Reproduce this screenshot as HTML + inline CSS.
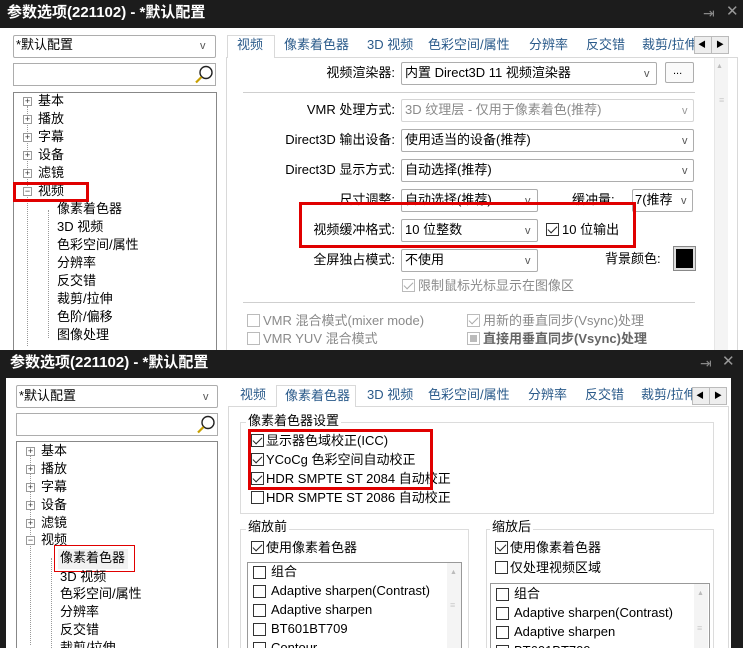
<!DOCTYPE html>
<html style="width:743px;height:648px;overflow:hidden"><head><meta charset="utf-8"><style>
*{margin:0;padding:0;box-sizing:border-box}
body{width:743px;height:648px;overflow:hidden;background:#fff;position:relative;font-family:"Liberation Sans","Noto Sans CJK SC",sans-serif;font-size:13px;color:#000}
div,span{position:absolute}
.t{white-space:nowrap;line-height:16px}
.title{background:#1c1c1c;color:#fff;font-weight:bold;font-size:14px}
.box{border:1px solid #adadad;background:#fff}
.cb{border:1px solid #adadad;background:#fff;border-radius:2px}
.v{font-size:11px;color:#555}
.tab{color:#2a5a8a;white-space:nowrap;line-height:16px}
.chk{width:13px;height:13px;border:1px solid #333;background:#fff}
.chk.on::after{content:"";position:absolute;left:3px;top:0px;width:4px;height:8px;border:solid #222;border-width:0 1.5px 1.5px 0;transform:rotate(45deg)}
.g{color:#8a8a8a}
.g .chk,.chk.g{border-color:#bbb}
.chk.g.on::after{border-color:#aaa}
.red{border:3px solid #e00000}
.pm{width:9px;height:9px;border:1px solid #999;background:#fff;font-size:9px;line-height:7px;text-align:center;color:#333}
.line{background:#cfcfcf}
</style></head><body>

<!-- ===== TOP WINDOW ===== -->
<div class="title" style="left:0;top:0;width:743px;height:28px"></div>
<div class="t title" style="left:7px;top:4px;line-height:18px;background:none;font-size:15px">参数选项(221102) - *默认配置</div>
<div class="t" style="left:703px;top:5px;color:#888;font-size:14px">⇥</div>
<div class="t" style="left:726px;top:4px;color:#999;font-size:15px">✕</div>

<div class="cb" style="left:13px;top:35px;width:203px;height:23px"></div>
<div class="t" style="left:16px;top:37px">*默认配置</div>
<div class="t v" style="left:200px;top:38px">v</div>
<div class="box" style="left:13px;top:63px;width:203px;height:23px"></div>
<svg style="position:absolute;left:194px;top:65px" width="20" height="19"><circle cx="12" cy="7.5" r="6" fill="#fff" stroke="#222" stroke-width="1.4"/><line x1="7.5" y1="12" x2="2" y2="17.5" stroke="#c8a000" stroke-width="2.2"/></svg>
<div class="box" style="left:13px;top:92px;width:204px;height:270px;border-color:#888"></div>
<div style="left:27px;top:106px;height:240px;border-left:1px dotted #999"></div>
<div style="left:48px;top:210px;height:128px;border-left:1px dotted #999"></div>

<div class="pm" style="left:23px;top:97px">+</div><div class="t" style="left:38px;top:93px">基本</div>
<div class="pm" style="left:23px;top:115px">+</div><div class="t" style="left:38px;top:111px">播放</div>
<div class="pm" style="left:23px;top:133px">+</div><div class="t" style="left:38px;top:129px">字幕</div>
<div class="pm" style="left:23px;top:151px">+</div><div class="t" style="left:38px;top:147px">设备</div>
<div class="pm" style="left:23px;top:169px">+</div><div class="t" style="left:38px;top:165px">滤镜</div>
<div class="pm" style="left:23px;top:187px">−</div><div class="t" style="left:38px;top:183px">视频</div>
<div class="red" style="left:13px;top:182px;width:76px;height:20px"></div>
<div class="t" style="left:57px;top:201px">像素着色器</div>
<div class="t" style="left:57px;top:219px">3D 视频</div>
<div class="t" style="left:57px;top:237px">色彩空间/属性</div>
<div class="t" style="left:57px;top:255px">分辨率</div>
<div class="t" style="left:57px;top:273px">反交错</div>
<div class="t" style="left:57px;top:291px">裁剪/拉伸</div>
<div class="t" style="left:57px;top:309px">色阶/偏移</div>
<div class="t" style="left:57px;top:327px">图像处理</div>

<!-- tabs -->
<div style="left:226px;top:57px;width:512px;height:300px;border:1px solid #d9d9d9;background:#fff"></div>
<div style="left:227px;top:35px;width:48px;height:23px;border:1px solid #d9d9d9;border-bottom:none;background:#fff"></div>
<div class="tab" style="left:237px;top:37px">视频</div>
<div class="tab" style="left:284px;top:37px">像素着色器</div>
<div class="tab" style="left:367px;top:37px">3D 视频</div>
<div class="tab" style="left:428px;top:37px">色彩空间/属性</div>
<div class="tab" style="left:529px;top:37px">分辨率</div>
<div class="tab" style="left:586px;top:37px">反交错</div>
<div class="tab" style="left:642px;top:37px;width:52px;overflow:hidden">裁剪/拉伸</div>
<div style="left:694px;top:36px;width:35px;height:18px;border:1px solid #bbb;background:#eee"></div>
<div style="left:711px;top:36px;width:1px;height:18px;background:#bbb"></div>
<div class="t" style="left:698px;top:37px;font-size:8px;color:#000">◀</div>
<div class="t" style="left:716px;top:37px;font-size:8px;color:#000">▶</div>
<div style="left:714px;top:58px;width:14px;height:292px;background:#f4f4f4;border-left:1px solid #e6e6e6"></div>
<div class="t" style="left:716px;top:59px;font-size:7px;color:#bbb">▲</div>
<div class="t" style="left:719px;top:96px;font-size:9px;color:#ccc;line-height:9px">≡</div>

<div class="t" style="left:300px;top:65px;width:95px;text-align:right">视频渲染器:</div>
<div class="cb" style="left:401px;top:62px;width:256px;height:23px"></div>
<div class="t" style="left:405px;top:65px">内置 Direct3D 11 视频渲染器</div><div class="t v" style="left:644px;top:66px">v</div>
<div class="cb" style="left:665px;top:62px;width:29px;height:21px;background:#fafafa"></div><div class="t" style="left:673px;top:63px;font-size:11px">...</div>
<div class="line" style="left:243px;top:92px;width:452px;height:1px"></div>

<div class="t" style="left:280px;top:102px;width:115px;text-align:right">VMR 处理方式:</div>
<div class="cb" style="left:401px;top:99px;width:293px;height:23px;border-color:#d5d5d5"></div>
<div class="t g" style="left:405px;top:102px">3D 纹理层 - 仅用于像素着色(推荐)</div><div class="t v" style="left:682px;top:103px;color:#999">v</div>

<div class="t" style="left:260px;top:132px;width:135px;text-align:right">Direct3D 输出设备:</div>
<div class="cb" style="left:401px;top:129px;width:293px;height:23px"></div>
<div class="t" style="left:405px;top:132px">使用适当的设备(推荐)</div><div class="t v" style="left:682px;top:133px">v</div>

<div class="t" style="left:260px;top:162px;width:135px;text-align:right">Direct3D 显示方式:</div>
<div class="cb" style="left:401px;top:159px;width:293px;height:23px"></div>
<div class="t" style="left:405px;top:162px">自动选择(推荐)</div><div class="t v" style="left:682px;top:163px">v</div>

<div class="t" style="left:300px;top:192px;width:95px;text-align:right">尺寸调整:</div>
<div class="cb" style="left:401px;top:189px;width:137px;height:23px"></div>
<div class="t" style="left:405px;top:192px">自动选择(推荐)</div><div class="t v" style="left:525px;top:193px">v</div>
<div class="t" style="left:572px;top:192px">缓冲量:</div>
<div class="cb" style="left:632px;top:189px;width:61px;height:23px"></div>
<div class="t" style="left:635px;top:192px;width:40px;overflow:hidden">7(推荐</div><div class="t v" style="left:681px;top:193px">v</div>

<div class="t" style="left:290px;top:222px;width:105px;text-align:right">视频缓冲格式:</div>
<div class="cb" style="left:401px;top:219px;width:137px;height:23px"></div>
<div class="t" style="left:405px;top:222px">10 位整数</div><div class="t v" style="left:525px;top:223px">v</div>
<div class="chk on" style="left:546px;top:223px"></div><div class="t" style="left:562px;top:222px">10 位输出</div>
<div class="red" style="left:299px;top:202px;width:337px;height:46px"></div>

<div class="t" style="left:290px;top:252px;width:105px;text-align:right">全屏独占模式:</div>
<div class="cb" style="left:401px;top:249px;width:137px;height:23px"></div>
<div class="t" style="left:405px;top:252px">不使用</div><div class="t v" style="left:525px;top:253px">v</div>
<div class="t" style="left:605px;top:251px">背景颜色:</div>
<div style="left:674px;top:247px;width:21px;height:23px;border:2px solid #ddd;background:#000;outline:1px solid #888"></div>

<div class="chk g on" style="left:402px;top:279px"></div><div class="t g" style="left:418px;top:278px">限制鼠标光标显示在图像区</div>
<div class="line" style="left:243px;top:302px;width:452px;height:1px"></div>
<div class="chk g" style="left:247px;top:314px"></div><div class="t g" style="left:263px;top:313px">VMR 混合模式(mixer mode)</div>
<div class="chk g on" style="left:467px;top:314px"></div><div class="t g" style="left:483px;top:313px">用新的垂直同步(Vsync)处理</div>
<div class="chk g" style="left:247px;top:332px"></div><div class="t g" style="left:263px;top:331px">VMR YUV 混合模式</div>
<div class="chk g" style="left:467px;top:332px"><div style="left:2px;top:2px;width:7px;height:7px;background:#bbb"></div></div><div class="t" style="left:483px;top:331px;font-weight:bold;color:#666">直接用垂直同步(Vsync)处理</div>

<!-- ===== BOTTOM WINDOW ===== -->
<div style="left:0;top:350px;width:743px;height:298px;background:#fff"></div>
<div class="title" style="left:0;top:350px;width:743px;height:28px"></div>
<div class="t title" style="left:10px;top:354px;line-height:18px;background:none;font-size:15px">参数选项(221102) - *默认配置</div>
<div class="t" style="left:700px;top:355px;color:#888;font-size:14px">⇥</div>
<div class="t" style="left:722px;top:354px;color:#999;font-size:15px">✕</div>
<div style="left:0;top:378px;width:6px;height:270px;background:#1c1c1c"></div>
<div style="left:731px;top:378px;width:12px;height:270px;background:#1c1c1c"></div>

<div class="cb" style="left:16px;top:385px;width:202px;height:23px"></div>
<div class="t" style="left:19px;top:388px">*默认配置</div><div class="t v" style="left:203px;top:389px">v</div>
<div class="box" style="left:16px;top:413px;width:202px;height:23px"></div>
<svg style="position:absolute;left:196px;top:415px" width="20" height="19"><circle cx="12" cy="7.5" r="6" fill="#fff" stroke="#222" stroke-width="1.4"/><line x1="7.5" y1="12" x2="2" y2="17.5" stroke="#c8a000" stroke-width="2.2"/></svg>
<div class="box" style="left:16px;top:441px;width:202px;height:220px;border-color:#888"></div>
<div style="left:30px;top:455px;height:190px;border-left:1px dotted #999"></div>
<div style="left:51px;top:558px;height:90px;border-left:1px dotted #999"></div>
<div class="pm" style="left:26px;top:447px">+</div><div class="t" style="left:41px;top:443px">基本</div>
<div class="pm" style="left:26px;top:465px">+</div><div class="t" style="left:41px;top:461px">播放</div>
<div class="pm" style="left:26px;top:483px">+</div><div class="t" style="left:41px;top:479px">字幕</div>
<div class="pm" style="left:26px;top:501px">+</div><div class="t" style="left:41px;top:497px">设备</div>
<div class="pm" style="left:26px;top:519px">+</div><div class="t" style="left:41px;top:515px">滤镜</div>
<div class="pm" style="left:26px;top:536px">−</div><div class="t" style="left:41px;top:532px">视频</div>
<div style="left:58px;top:549px;width:70px;height:20px;background:#f2f2f2"></div>
<div class="t" style="left:60px;top:550px">像素着色器</div>
<div style="left:54px;top:545px;width:81px;height:27px;border:1px solid #e00000"></div>
<div class="t" style="left:60px;top:569px">3D 视频</div>
<div class="t" style="left:60px;top:586px">色彩空间/属性</div>
<div class="t" style="left:60px;top:604px">分辨率</div>
<div class="t" style="left:60px;top:622px">反交错</div>
<div class="t" style="left:60px;top:640px">裁剪/拉伸</div>

<div style="left:228px;top:406px;width:501px;height:260px;border:1px solid #d9d9d9;background:#fff"></div>
<div style="left:276px;top:385px;width:80px;height:22px;border:1px solid #d9d9d9;border-bottom:none;background:#fff"></div>
<div class="tab" style="left:240px;top:387px">视频</div>
<div class="tab" style="left:285px;top:388px">像素着色器</div>
<div class="tab" style="left:367px;top:387px">3D 视频</div>
<div class="tab" style="left:428px;top:387px">色彩空间/属性</div>
<div class="tab" style="left:528px;top:387px">分辨率</div>
<div class="tab" style="left:585px;top:387px">反交错</div>
<div class="tab" style="left:641px;top:387px;width:52px;overflow:hidden">裁剪/拉伸</div>
<div style="left:692px;top:387px;width:35px;height:18px;border:1px solid #bbb;background:#eee"></div>
<div style="left:709px;top:387px;width:1px;height:18px;background:#bbb"></div>
<div class="t" style="left:696px;top:388px;font-size:8px">◀</div>
<div class="t" style="left:714px;top:388px;font-size:8px">▶</div>

<div style="left:240px;top:422px;width:474px;height:92px;border:1px solid #dcdcdc"></div>
<div class="t" style="left:246px;top:413px;background:#fff;padding:0 2px">像素着色器设置</div>
<div class="chk on" style="left:251px;top:434px"></div><div class="t" style="left:266px;top:433px">显示器色域校正(ICC)</div>
<div class="chk on" style="left:251px;top:453px"></div><div class="t" style="left:266px;top:452px">YCoCg 色彩空间自动校正</div>
<div class="chk on" style="left:251px;top:472px"></div><div class="t" style="left:266px;top:471px">HDR SMPTE ST 2084 自动校正</div>
<div class="chk" style="left:251px;top:491px"></div><div class="t" style="left:266px;top:490px">HDR SMPTE ST 2086 自动校正</div>
<div class="red" style="left:248px;top:429px;width:185px;height:61px"></div>

<div style="left:240px;top:529px;width:229px;height:130px;border:1px solid #dcdcdc"></div>
<div class="t" style="left:246px;top:519px;background:#fff;padding:0 2px">缩放前</div>
<div class="chk on" style="left:251px;top:541px"></div><div class="t" style="left:266px;top:540px">使用像素着色器</div>
<div style="left:247px;top:562px;width:215px;height:100px;border:1px solid #999"></div>
<div style="left:447px;top:563px;width:14px;height:90px;background:#f4f4f4"></div>
<div class="t" style="left:450px;top:565px;font-size:7px;color:#bbb">▲</div>
<div class="t" style="left:450px;top:601px;font-size:9px;color:#ccc;line-height:9px">≡</div>
<div class="chk" style="left:253px;top:566px"></div><div class="t" style="left:271px;top:564px">组合</div>
<div class="chk" style="left:253px;top:585px"></div><div class="t" style="left:271px;top:583px">Adaptive sharpen(Contrast)</div>
<div class="chk" style="left:253px;top:604px"></div><div class="t" style="left:271px;top:602px">Adaptive sharpen</div>
<div class="chk" style="left:253px;top:623px"></div><div class="t" style="left:271px;top:621px">BT601BT709</div>
<div class="chk" style="left:253px;top:642px"></div><div class="t" style="left:271px;top:640px">Contour</div>

<div style="left:486px;top:529px;width:228px;height:130px;border:1px solid #dcdcdc"></div>
<div class="t" style="left:490px;top:519px;background:#fff;padding:0 2px">缩放后</div>
<div class="chk on" style="left:495px;top:541px"></div><div class="t" style="left:510px;top:540px">使用像素着色器</div>
<div class="chk" style="left:495px;top:561px"></div><div class="t" style="left:510px;top:560px">仅处理视频区域</div>
<div style="left:490px;top:583px;width:220px;height:80px;border:1px solid #999"></div>
<div style="left:694px;top:584px;width:14px;height:70px;background:#f4f4f4"></div>
<div class="t" style="left:697px;top:586px;font-size:7px;color:#bbb">▲</div>
<div class="t" style="left:697px;top:624px;font-size:9px;color:#ccc;line-height:9px">≡</div>
<div class="chk" style="left:496px;top:588px"></div><div class="t" style="left:514px;top:586px">组合</div>
<div class="chk" style="left:496px;top:607px"></div><div class="t" style="left:514px;top:605px">Adaptive sharpen(Contrast)</div>
<div class="chk" style="left:496px;top:626px"></div><div class="t" style="left:514px;top:624px">Adaptive sharpen</div>
<div class="chk" style="left:496px;top:645px"></div><div class="t" style="left:514px;top:643px">BT601BT709</div>

</body></html>
